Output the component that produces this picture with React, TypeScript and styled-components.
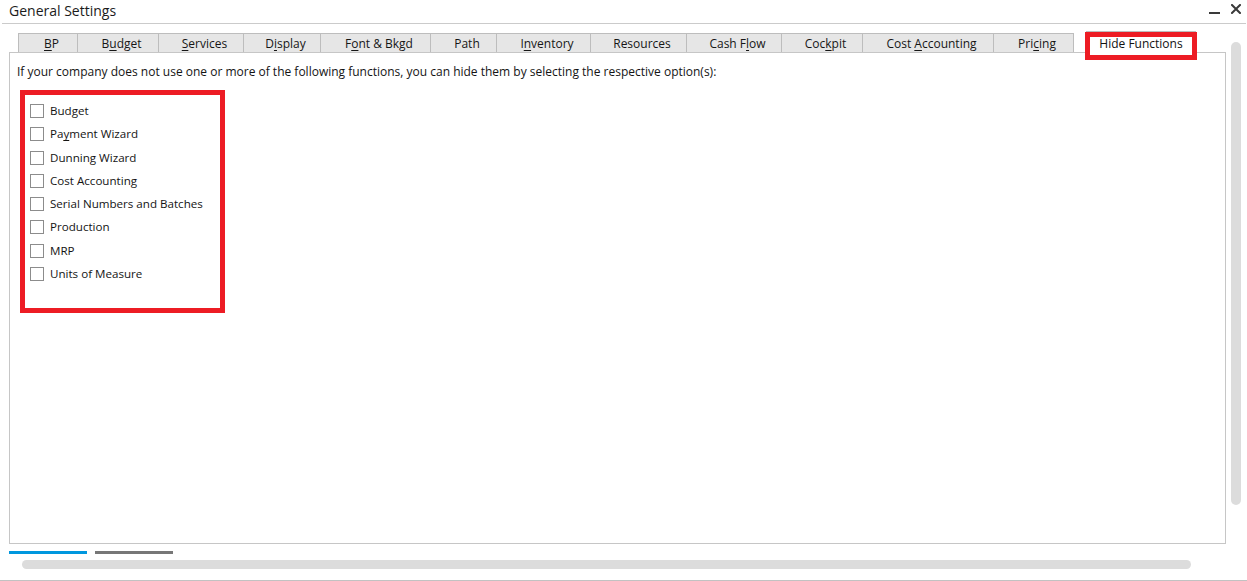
import React from "react";
import styled, { createGlobalStyle } from "styled-components";

const GlobalStyle = createGlobalStyle`
  html, body { margin: 0; padding: 0; background: #ffffff; }
  body { font-family: "Open Sans", "Noto Sans", Arial, sans-serif; color: #141414; }
  * { box-sizing: border-box; }
`;

const Window = styled.div`
  width: 1247px;
  height: 581px;
  display: flex;
  flex-direction: column;
  border-bottom: 1px solid #c2c2c2;
  overflow: hidden;
`;

const TitleBar = styled.div`
  height: 24px;
  margin: 0 1px 0 2px;
  padding: 0 5px 0 7px;
  display: flex;
  align-items: flex-start;
  border-bottom: 1px solid #cbcbcb;
`;

const Title = styled.div`
  font-size: 14px;
  line-height: 22px;
  color: #1b1b1b;
`;

const Controls = styled.div`
  margin-left: auto;
  display: flex;
  align-items: flex-start;
`;

const MinimizeGlyph = styled.span`
  display: block;
  width: 11px;
  height: 2px;
  margin-top: 12px;
  background: #3a3a3a;
`;

const CloseGlyph = styled.svg`
  display: block;
  width: 10px;
  height: 10px;
  margin: 4px 0 0 11px;
`;

const Main = styled.div`
  flex: 1;
  min-height: 0;
  display: flex;
  padding-left: 9px;
`;

const TabColumn = styled.div`
  width: 1217px;
  display: flex;
  flex-direction: column;
  padding-top: 9px;
`;

const TabStrip = styled.div`
  display: flex;
  align-items: flex-end;
  height: 19px;
  margin-left: 9px;
  position: relative;
  z-index: 1;
`;

const Tab = styled.div<{ $w: number; $last?: boolean }>`
  width: ${(p) => p.$w}px;
  height: 19px;
  background: #e6e6e6;
  border-top: 1px solid #bdbdbd;
  border-left: 1px solid #bdbdbd;
  border-right: ${(p) => (p.$last ? "1px solid #bdbdbd" : "none")};
  padding: 1px 0 0 7px;
  display: flex;
  align-items: center;
  justify-content: center;
  font-size: 12px;
  line-height: 16px;
  white-space: nowrap;
  color: #161616;
`;

const ActiveTab = styled.div`
  position: relative;
  width: 110px;
  height: 22px;
  margin-left: 12px;
  margin-bottom: -1px;
  background: #ffffff;
  border: 1px solid #bdbdbd;
  border-bottom: none;
  display: flex;
  align-items: center;
  justify-content: center;
  padding-top: 2px;
  font-size: 12px;
  line-height: 16px;
  white-space: nowrap;
  color: #111;
`;

const Highlight = styled.div<{ $w: number; $h: number }>`
  width: ${(p) => p.$w}px;
  height: ${(p) => p.$h}px;
  border: 5px solid #ed1c24;
`;

const TabHighlight = styled(Highlight)`
  position: absolute;
  left: -2px;
  top: 0;
`;

const Key = styled.span`
  text-decoration: underline;
  text-underline-offset: 2px;
  text-decoration-thickness: 1px;
`;

const Panel = styled.div`
  flex: 1;
  border: 1px solid #c6c6c6;
  padding: 10px 7px 0;
`;

const Intro = styled.p`
  margin: 0;
  font-size: 12px;
  line-height: 17px;
  color: #141414;
  white-space: nowrap;
`;

const OptionsBox = styled(Highlight)`
  margin: 10px 0 0 3px;
  padding: 9px 0 0 5px;
  display: flex;
  flex-direction: column;
`;

const OptionRow = styled.label`
  height: 23.3px;
  display: flex;
  align-items: flex-start;
  font-size: 11.6px;
  line-height: 14px;
  color: #141414;
  white-space: nowrap;
`;

const CheckBox = styled.span`
  width: 14px;
  height: 14px;
  border: 1px solid #8c8c8c;
  background: #fff;
  margin-right: 6px;
  flex-shrink: 0;
`;

const VScroll = styled.div`
  width: 10px;
  height: 463px;
  margin: 18px 0 0 5px;
  border-radius: 5px;
  background: #dcdcdc;
`;

const Footer = styled.div`
  height: 36px;
  padding: 7px 0 0;
  display: flex;
  flex-direction: column;
`;

const Indicators = styled.div`
  display: flex;
  gap: 8px;
  padding-left: 9px;
`;

const Indicator = styled.span<{ $active?: boolean }>`
  width: 78px;
  height: 3px;
  background: ${(p) => (p.$active ? "#0097de" : "#777777")};
`;

const HScroll = styled.div`
  width: 1169px;
  height: 9px;
  margin: 6px 0 0 22px;
  border-radius: 5px;
  background: #dcdcdc;
`;

type Label = { pre: string; key?: string; post?: string };

const tabs: { w: number; label: Label }[] = [
  { w: 59, label: { pre: "", key: "B", post: "P" } },
  { w: 81, label: { pre: "B", key: "u", post: "dget" } },
  { w: 85, label: { pre: "", key: "S", post: "ervices" } },
  { w: 77, label: { pre: "D", key: "i", post: "splay" } },
  { w: 110, label: { pre: "F", key: "o", post: "nt & Bkgd" } },
  { w: 66, label: { pre: "Path" } },
  { w: 94, label: { pre: "I", key: "n", post: "ventory" } },
  { w: 96, label: { pre: "Resources" } },
  { w: 95, label: { pre: "Cash F", key: "l", post: "ow" } },
  { w: 81, label: { pre: "Coc", key: "k", post: "pit" } },
  { w: 131, label: { pre: "Cost ", key: "A", post: "ccounting" } },
  { w: 81, label: { pre: "Pri", key: "c", post: "ing" } },
];

const options: Label[] = [
  { pre: "Budget" },
  { pre: "Pa", key: "y", post: "ment Wizard" },
  { pre: "Dunning Wizard" },
  { pre: "Cost Accounting" },
  { pre: "Serial Numbers and Batches" },
  { pre: "Production" },
  { pre: "MRP" },
  { pre: "Units of Measure" },
];

function Text({ label }: { label: Label }) {
  return (
    <span>
      {label.pre}
      {label.key && <Key>{label.key}</Key>}
      {label.post}
    </span>
  );
}

export default function App() {
  return (
    <>
      <GlobalStyle />
      <Window>
        <TitleBar>
          <Title>General Settings</Title>
          <Controls>
            <MinimizeGlyph />
            <CloseGlyph viewBox="0 0 10 10">
              <path d="M1 1 L9 9 M9 1 L1 9" stroke="#3a3a3a" strokeWidth="2" strokeLinecap="square" fill="none" />
            </CloseGlyph>
          </Controls>
        </TitleBar>
        <Main>
          <TabColumn>
            <TabStrip>
              {tabs.map((t, i) => (
                <Tab key={i} $w={t.w} $last={i === tabs.length - 1}>
                  <Text label={t.label} />
                </Tab>
              ))}
              <ActiveTab>
                <span>Hide Functions</span>
                <TabHighlight $w={112} $h={28} />
              </ActiveTab>
            </TabStrip>
            <Panel>
              <Intro>
                If your company does not use one or more of the following functions, you can hide them by selecting the respective option(s):
              </Intro>
              <OptionsBox $w={205} $h={223}>
                {options.map((o, i) => (
                  <OptionRow key={i}>
                    <CheckBox />
                    <Text label={o} />
                  </OptionRow>
                ))}
              </OptionsBox>
            </Panel>
          </TabColumn>
          <VScroll />
        </Main>
        <Footer>
          <Indicators>
            <Indicator $active />
            <Indicator />
          </Indicators>
          <HScroll />
        </Footer>
      </Window>
    </>
  );
}
